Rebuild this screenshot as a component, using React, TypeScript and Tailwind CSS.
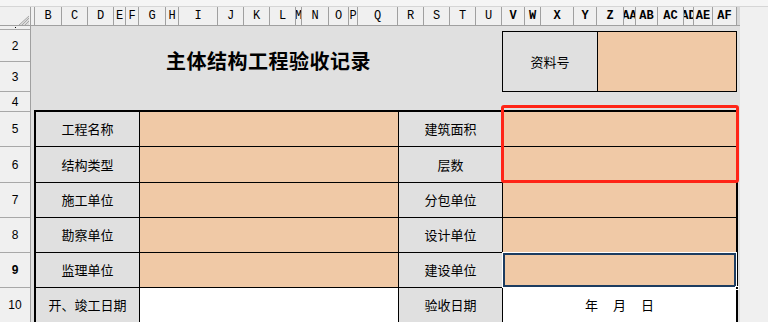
const COLS: [string, number][] = [
  ["", 4], ["B", 27], ["C", 26], ["D", 26], ["E", 12], ["F", 13], ["G", 27], ["H", 13],
  ["I", 39], ["J", 26], ["K", 26], ["L", 26], ["M", 6], ["N", 27], ["O", 20], ["P", 9],
  ["Q", 40], ["R", 26], ["S", 26], ["T", 26], ["U", 26], ["V", 23], ["W", 16], ["X", 33],
  ["Y", 23], ["Z", 27], ["AA", 12], ["AB", 22], ["AC", 26], ["AD", 10], ["AE", 19], ["AF", 24],
];

const ROWS: [string, number][] = [
  ["1", 4], ["2", 32], ["3", 30], ["4", 20], ["5", 35], ["6", 36],
  ["7", 35], ["8", 35], ["9", 35], ["10", 35],
];

type Line = { a: string; b: string; h: string; last?: boolean };

const LINES: Line[] = [
  { a: "工程名称", b: "建筑面积", h: "h-[35px]" },
  { a: "结构类型", b: "层数", h: "h-[36px]" },
  { a: "施工单位", b: "分包单位", h: "h-[35px]" },
  { a: "勘察单位", b: "设计单位", h: "h-[35px]" },
  { a: "监理单位", b: "建设单位", h: "h-[35px]" },
  { a: "开、竣工日期", b: "验收日期", h: "h-[35px]", last: true },
];

function Corner() {
  return (
    <div className="w-[31px] h-full shrink-0 border-r border-b border-[#a0a0a0] bg-[#f0f0f0]">
      <svg width="30" height="18" viewBox="0 0 30 18">
        <polygon points="29,9 29,18 19,18" fill="#dcdcdc" />
        <line x1="29" y1="11" x2="22" y2="18" stroke="#a8a8a8" />
        <line x1="29" y1="14" x2="25" y2="18" stroke="#a8a8a8" />
        <line x1="29" y1="9" x2="19" y2="18" stroke="#a8a8a8" />
      </svg>
    </div>
  );
}

export default function App() {
  const cjk = "font-['Noto_Sans_CJK_SC',sans-serif]";
  return (
    <div className="w-[768px] h-[322px] overflow-hidden bg-[#f0f0f0]">
      <div className="h-[7px] bg-[#f5f5f5] border-b border-[#d6d6d6]" />
      {/* column letters */}
      <div className="flex h-[19px]">
        <Corner />
        {COLS.map(([name, w], i) => (
          <div
            key={name + i}
            style={{ width: w }}
            className={`shrink-0 h-full overflow-hidden flex items-center justify-center border-r border-b border-[#a0a0a0] bg-[#f0f0f0] font-['Liberation_Mono',monospace] text-[12px] text-black ${i >= 21 ? "font-bold" : ""}`}
          >
            {name}
          </div>
        ))}
        <div className="w-[3px] h-full shrink-0 bg-[#d8d8d8] border-b border-[#a0a0a0]" />
      </div>

      <div className="flex">
        {/* row numbers */}
        <div className="w-[31px] shrink-0 flex flex-col border-r border-[#a0a0a0] bg-[#f0f0f0]">
          {ROWS.map(([n, h]) => (
            <div
              key={n}
              style={{ height: h }}
              className={`shrink-0 overflow-hidden flex items-center justify-center border-b border-[#a8a8a8] font-['Liberation_Sans',sans-serif] text-[12px] text-black ${n === "9" ? "font-bold" : ""}`}
            >
              {n === "1" ? <span className="w-px h-px bg-black" /> : n}
            </div>
          ))}
        </div>

        {/* sheet */}
        <div className={`relative w-[709px] h-[296px] shrink-0 bg-[#e0e0e0] text-black ${cjk}`}>
          <div className="h-[4px]" />
          <div className="flex h-[62px]">
            <div className="w-[4px]" />
            <div className="w-[467px] flex items-center justify-center text-[20px] font-bold tracking-[0.5px]">
              主体结构工程验收记录
            </div>
            <div className="mt-px h-[61px] w-[235px] border border-black flex">
              <div className="w-[95px] border-r border-black flex items-center justify-center text-[13px]">
                资料号
              </div>
              <div className="flex-1 bg-[#f0c9a6]" />
            </div>
          </div>
          <div className="h-[18px]" />

          <div className="ml-[3px] w-[704px] border-l-2 border-t-2 border-r-2 border-black grid grid-cols-[104px_259px_104px_233px] text-[13px]">
            {LINES.map((l, i) => (
              <div key={l.a} className="contents">
                <div className={`${l.h} border-r border-b border-black flex items-center justify-center`}>{l.a}</div>
                <div className={`${l.h} border-r border-b border-black ${l.last ? "bg-white" : "bg-[#f0c9a6]"}`} />
                <div className={`${l.h} border-r border-b border-black flex items-center justify-center`}>{l.b}</div>
                <div className={`${l.h} relative border-b border-black flex items-center justify-center gap-[15px] ${l.last ? "bg-white" : "bg-[#f0c9a6]"}`}>
                  {l.last && (
                    <>
                      <span>年</span>
                      <span>月</span>
                      <span>日</span>
                    </>
                  )}
                  {i === 4 && (
                    <>
                      <div className="absolute -left-px -top-px -right-px -bottom-px border border-white" />
                      <div className="absolute inset-0 border-2 border-[#1d3c60]" />
                      <div className="absolute -right-[3px] -bottom-[3px] w-[4px] h-[4px] bg-black border border-white" />
                    </>
                  )}
                </div>
              </div>
            ))}
          </div>

          {/* red highlight frame */}
          <div className="absolute left-[470px] top-[79px] w-[238px] h-[78px] border-[3px] border-[#ff2416] rounded-[3px]" />
        </div>
      </div>
    </div>
  );
}
